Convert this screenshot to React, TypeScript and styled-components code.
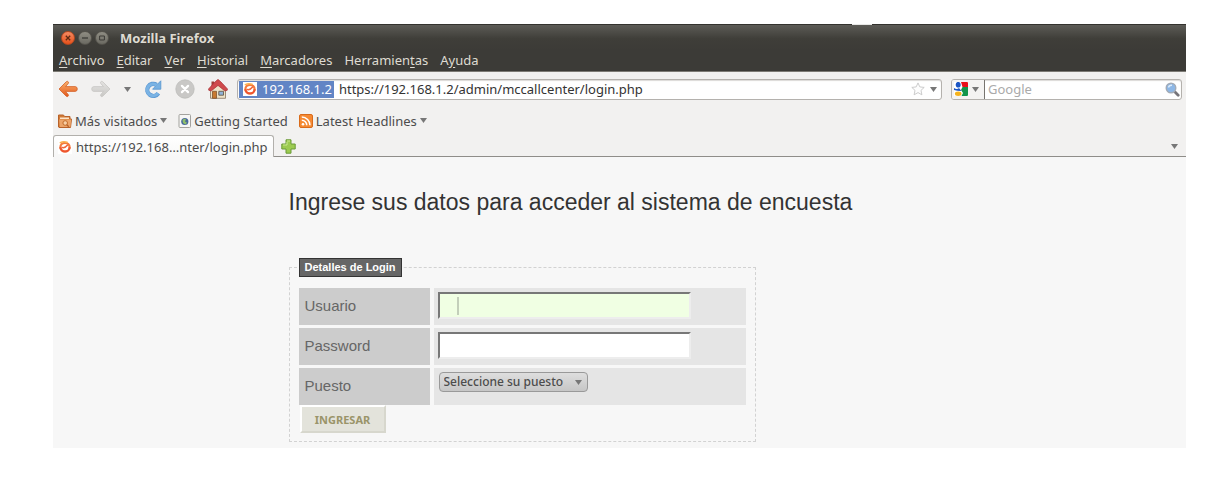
import React from "react";
import styled, { createGlobalStyle } from "styled-components";

const ui = `"Noto Sans", "Open Sans", sans-serif`;
const page = `"Liberation Sans", Arial, sans-serif`;

const GlobalStyle = createGlobalStyle`
  *, *::before, *::after { box-sizing: border-box; }
  body { margin: 0; background: #fff; font-family: ${ui}; }
  button, input, select { font: inherit; color: inherit; margin: 0; }
  svg { display: block; flex: none; }
`;

const Desktop = styled.div`
  padding: 24px 38px 44px 53px;
`;

const Window = styled.div`
  position: relative;
  color: #4c4c4c;
  font-size: 13px;
  background: #f2f1f0;
`;

const PanelNotch = styled.span`
  position: absolute;
  top: 0;
  right: 314px;
  width: 20px;
  height: 1px;
  background: #e8e8e6;
`;

const TitleBar = styled.header`
  display: flex;
  align-items: center;
  height: 26px;
  padding: 0 8px;
  gap: 3px;
  color: #dfdbd2;
  background: linear-gradient(#5c5b56, #3f3e39 55%, #3c3b37);
  border-top: 1px solid #33322e;
`;

const WindowButton = styled.button<{ $close?: boolean }>`
  display: grid;
  place-items: center;
  width: 14px;
  height: 14px;
  padding: 0;
  border: 1px solid ${(p) => (p.$close ? "#b4481f" : "#55534c")};
  border-radius: 50%;
  color: ${(p) => (p.$close ? "#5e2a12" : "#3c3b37")};
  background: ${(p) => (p.$close ? "linear-gradient(#f58a62, #e6511b)" : "linear-gradient(#8f8d83, #6b6a62)")};
`;

const WindowTitle = styled.h1`
  margin: 0 0 0 8px;
  font-size: 13px;
  line-height: 16px;
  font-weight: 700;
`;

const MenuBar = styled.nav`
  display: flex;
  align-items: center;
  height: 22px;
  padding: 0 6px 1px;
  gap: 12px;
  color: #dfdbd2;
  background: #3c3b37;
  border-bottom: 1px solid #7d7b75;
`;

const PlainButton = styled.button<{ $gap?: number }>`
  display: flex;
  align-items: center;
  gap: ${(p) => p.$gap ?? 0}px;
  padding: 0;
  border: 0;
  background: none;
  line-height: 16px;
  white-space: pre;

  u { text-underline-offset: 2px; }
`;

const NavBar = styled.div`
  display: flex;
  align-items: center;
  height: 34px;
  padding: 0 4px 0 5px;
  gap: 9px;
`;

const NavButtons = styled.div`
  display: flex;
  align-items: center;
  gap: 13px;
`;

const Field = styled.div<{ $search?: boolean }>`
  display: flex;
  align-items: center;
  flex: ${(p) => (p.$search ? "0 1 231px" : "1 1 0")};
  min-width: 0;
  height: 21px;
  background: #fff;
  border: 1px solid #b4b1ad;
  border-radius: 3px;
  box-shadow: inset 0 1px 1px #dcdad8;
  overflow: hidden;
  gap: 5px;
  padding-right: ${(p) => (p.$search ? 1 : 4)}px;
`;

const Identity = styled.span`
  display: flex;
  align-items: center;
  align-self: stretch;
  gap: 5px;
  margin: 1px 0 1px 1px;
  padding: 0 2px 0 4px;
  color: #fff;
  background: #6285c5;
`;

const FieldInput = styled.input`
  flex: 1;
  min-width: 0;
  padding: 0;
  border: 0;
  outline: 0;
  line-height: 17px;
  background: none;
  color: #333;

  &::placeholder { color: #aaa; opacity: 1; }
`;

const Engine = styled.button`
  display: flex;
  align-items: center;
  align-self: stretch;
  gap: 4px;
  padding: 0 5px 0 2px;
  border: 0;
  border-right: 1px solid #77746f;
  background: #f4f3f2;
  margin-right: -2px;
`;

const Bookmarks = styled.nav`
  display: flex;
  align-items: center;
  height: 29px;
  padding: 0 5px;
  gap: 11px;
`;

const BookmarkLink = styled.a`
  display: flex;
  align-items: center;
  gap: 2px;
  color: inherit;
  line-height: 16px;
  text-decoration: none;
`;

const TabStrip = styled.div`
  display: flex;
  align-items: center;
  height: 22px;
  padding-right: 8px;
  box-shadow: inset 0 -1px #8f8d89;
`;

const Tab = styled.button`
  display: flex;
  align-items: center;
  height: 22px;
  width: 221px;
  padding: 0 4px;
  gap: 4px;
  border: 1px solid #b2b0ac;
  border-bottom: 0;
  border-radius: 3px 3px 0 0;
  background: linear-gradient(#fff, #f7f7f7);
  white-space: nowrap;
`;

const NewTab = styled(PlainButton)`
  margin: 0 auto 0 7px;
`;

const Content = styled.main`
  padding: 29px 0 6px;
  background: #f7f7f7;
  font-family: ${page};
`;

const Column = styled.div`
  max-width: 662px;
  margin: 0 auto;
`;

const Heading = styled.h2`
  margin: 0 0 40px;
  color: #333;
  font-size: 23px;
  line-height: 32px;
  font-weight: 400;
`;

const LoginBox = styled.fieldset`
  max-width: 467px;
  margin: 0;
  padding: 11px 9px 8px;
  border: 1px dashed #d2d2d2;
`;

const Legend = styled.legend`
  height: 19px;
  padding: 0 5px;
  color: #fff;
  font-size: 11px;
  line-height: 17px;
  font-weight: 700;
  background: #666;
  border: 1px solid #333;
`;

const Rows = styled.div`
  display: grid;
  gap: 3px;
`;

const Row = styled.div`
  display: grid;
  grid-template-columns: 131px 1fr;
  gap: 4px;
  height: 37px;
`;

const Label = styled.label`
  padding: 0 6px;
  color: #666;
  font-size: 15px;
  line-height: 36px;
  background: #ccc;
`;

const Cell = styled.div`
  position: relative;
  padding: 4px;
  background: #e5e5e5;
`;

const TextInput = styled.input<{ $active?: boolean }>`
  display: block;
  width: 253px;
  height: 27px;
  padding: 0 6px;
  border: 2px solid;
  border-color: #777 #ededed #ededed #777;
  outline: 0;
  background: ${(p) => (p.$active ? "#f0ffe3" : "#fff")};
`;

const Pointer = styled.span`
  position: absolute;
  top: 9px;
  left: 23px;
  width: 2px;
  height: 18px;
  background: #c3cfba;
`;

const SelectWrap = styled.div`
  position: relative;
  width: 149px;
  margin-left: 1px;

  svg { position: absolute; right: 6px; top: 8px; pointer-events: none; }
`;

const Select = styled.select`
  display: block;
  appearance: none;
  width: 100%;
  height: 20px;
  padding: 0 4px;
  color: #4c4c4c;
  font-family: ${ui};
  font-size: 12px;
  font-weight: 500;
  line-height: 16px;
  border: 1px solid #999;
  border-radius: 4px;
  background: linear-gradient(#dedede, #c6c6c6);
`;

const Submit = styled.button`
  display: block;
  width: 86px;
  height: 28px;
  margin: 0 0 0 1px;
  padding: 0;
  color: #9a9469;
  font-family: ${ui};
  font-size: 11px;
  font-weight: 700;
  background: #e3e3db;
  border: 2px solid;
  border-color: #fff #d7d7cd #d7d7cd #fff;
`;

const Caret = () => (
  <svg width="7" height="5" viewBox="0 0 7 5"><path d="M0 0h7L3.5 5z" fill="#777" /></svg>
);

const Favicon = () => (
  <svg width="14" height="14" viewBox="0 0 14 14">
    <path fill="#fff" d="M0 0h14v14H0z" />
    <ellipse cx="7" cy="7.200" rx="4.600" ry="4.300" fill="none" stroke="#f47a3c" strokeWidth="2.200" />
    <path d="M2.400 7.200a4.600 4.300 0 0 0 9.200 0" fill="none" stroke="#ee5530" strokeWidth="2.200" />
    <path d="M2.300 2.600Q5.500 1 9 2.300" fill="none" stroke="#fbb050" strokeWidth="1.500" strokeLinecap="round" />
    <path d="M4.400 7.600Q7 8.200 9.600 5" fill="none" stroke="#f0653a" strokeWidth="1.500" strokeLinecap="round" />
  </svg>
);

const Arrow = ({ forward }: { forward?: boolean }) => (
  <svg width="20" height="18" viewBox="0 0 20 18">
    <defs>
      <linearGradient id={forward ? "fw" : "bk"} x1="0" y1="0" x2="0" y2="1">
        <stop offset="0" stopColor={forward ? "#e4e3e1" : "#fbb36e"} />
        <stop offset="1" stopColor={forward ? "#c9c8c5" : "#e2571b"} />
      </linearGradient>
    </defs>
    <path
      transform={forward ? "matrix(-1 0 0 1 20 0)" : undefined}
      d="M1 9 8.200 1.800q1.300-1 2.100.1.600 1-.3 1.900L7.500 6.600H17.300q2 .2 2 2.400t-2 2.400H7.500l2.500 2.800q.9.900.2 1.900-.8 1-2 .1z"
      fill={`url(#${forward ? "fw" : "bk"})`} stroke={forward ? "#c8c7c4" : "#d3632c"} strokeWidth=".8" strokeLinejoin="round"
    />
  </svg>
);

const Reload = () => (
  <svg width="18" height="19" viewBox="0 0 18 19">
    <path d="M14.300 13.200A6 6 0 1 1 12.500 4.800" fill="none" stroke="#5f9ad3" strokeWidth="4.400" />
    <path d="M16.800.8v8.400H8.600z" fill="#78b1e2" stroke="#5f9ad3" strokeWidth=".9" strokeLinejoin="round" />
    <path d="M14 13.100A5.900 5.900 0 1 1 12.800 5.200" fill="none" stroke="#7ab3e4" strokeWidth="3" />
  </svg>
);

const Stop = () => (
  <svg width="20" height="20" viewBox="0 0 20 20">
    <circle cx="10" cy="10" r="9.200" fill="#c9c8c6" stroke="#bdbcba" strokeWidth=".8" />
    <path d="m6.900 6.900 6.200 6.200m0-6.200-6.200 6.200" stroke="#fff" strokeWidth="2.200" strokeLinecap="round" />
  </svg>
);

const Home = () => (
  <svg width="20" height="20" viewBox="0 0 20 20">
    <path d="M3.500 2.500h2.700V8H3.500z" fill="#9f3b35" />
    <path d="M2.500 9.500 10 3l7.500 6.500v9.800h-15z" fill="#eee3c8" stroke="#87745e" strokeWidth=".8" />
    <path d="M4.500 12.300h4v7h-4z" fill="#c97a30" stroke="#764821" strokeWidth=".7" />
    <path d="M10.800 12.300h4.700v3.900h-4.700z" fill="#8fb2d8" stroke="#675b4c" strokeWidth=".9" />
    <path d="M10 .5Q9.300.5 5.500 4.600L.5 10q-.2 1.700 1.500 1.700h1.500L10 6.400l6.500 5.300H18q1.700 0 1.500-1.700l-5-5.400Q10.700.5 10 .5z" fill="#cf4a4c" stroke="#a93338" strokeWidth=".7" strokeLinejoin="round" />
  </svg>
);

const Folder = () => (
  <svg width="14" height="14" viewBox="0 0 14 14">
    <path d="M.5 13V1h5l1 1.500H12V5h1.500l-1 8.500H1z" fill="#d27a35" stroke="#b8622a" />
    <path d="M2 3.500h9V5H2z" fill="#fbe3c8" />
    <path d="M1.200 5.500h12l-.8 7.500H1.800z" fill="#eda56a" />
    <circle cx="7.200" cy="9" r="2.300" fill="#f8cfa5" stroke="#c26c2c" />
    <path d="m8.800 10.700 2 2" stroke="#b8622a" strokeWidth="1.300" />
  </svg>
);

const PageIcon = () => (
  <svg width="14" height="14" viewBox="0 0 14 14">
    <rect x="1" y=".5" width="11.500" height="13" rx="1" fill="#f6f6f5" stroke="#a3a29e" />
    <circle cx="6.800" cy="7.500" r="3.600" fill="#48699b" />
    <path d="M4.500 6q2-2 3.500-.8L7 7.500l2 1.300-1.500 1.700L5 9z" fill="#8fbf6a" />
  </svg>
);

const Feed = () => (
  <svg width="14" height="14" viewBox="0 0 14 14">
    <rect x=".5" y=".5" width="13" height="13" rx="1.500" fill="#f58a33" stroke="#d96b1a" />
    <circle cx="4" cy="10.200" r="1.300" fill="#fff" />
    <path d="M2.800 6.200a5 5 0 0 1 5 5M2.800 3.100a8.200 8.200 0 0 1 8.200 8.200" fill="none" stroke="#fff" strokeWidth="1.500" />
  </svg>
);

const Plus = () => (
  <svg width="15" height="15" viewBox="0 0 15 15">
    <path d="M5 .8h5V5h4.200v5H10v4.200H5V10H.8V5H5z" fill="#9ccb50" stroke="#6b9a38" strokeLinejoin="round" />
    <path d="M6 2h3M2 6h4V3" fill="none" stroke="#c8e88d" />
  </svg>
);

const Star = () => (
  <svg width="14" height="14" viewBox="0 0 14 14">
    <path d="m7 .9 1.800 4 4.400.5L10 8.400l.9 4.400L7 10.600l-3.900 2.200.9-4.400L.8 5.400l4.400-.5z" fill="#fdfdfd" stroke="#c6c6c6" strokeWidth=".9" strokeLinejoin="round" />
  </svg>
);

const SearchLogo = () => (
  <svg width="14" height="14" viewBox="0 0 14 14">
    <path fill="#fff" d="M0 0h14v14H0z" />
    <path d="M7 0h6q1 0 1 1v4H8.500z" fill="#e8101a" />
    <path d="M8.500 5H14v8q0 1-1 1H7.500L9 11 7 8z" fill="#11954b" />
    <ellipse cx="4.200" cy="2.700" rx="2.500" ry="2.800" fill="#1b55c4" />
    <path d="M0 6q3 2 5 0l2.500 3Q3 9 0 8z" fill="#1b55c4" />
    <ellipse cx="4.200" cy="11.800" rx="3.300" ry="2.200" fill="#f5b21c" />
  </svg>
);

const Magnifier = () => (
  <svg width="15" height="15" viewBox="0 0 15 15">
    <path d="m10 10 3.200 3.200" stroke="#77757a" strokeWidth="2.800" strokeLinecap="round" />
    <circle cx="6" cy="6" r="4.800" fill="#8db7e6" stroke="#a3abb6" strokeWidth="1.400" />
    <path d="M3.500 5.500Q4 3 7 3.200" fill="none" stroke="#dcebfa" strokeWidth="1.400" />
  </svg>
);

const menus = [
  ["", "A", "rchivo"],
  ["", "E", "ditar"],
  ["", "V", "er"],
  ["", "H", "istorial"],
  ["", "M", "arcadores"],
  ["Herramien", "t", "as"],
  ["A", "y", "uda"],
];

export default function App() {
  return (
    <>
      <GlobalStyle />
      <Desktop>
        <Window>
          <TitleBar>
            <WindowButton $close aria-label="Cerrar">
              <svg width="6" height="6" viewBox="0 0 6 6"><path d="m.8.8 4.400 4.400m0-4.400L.8 5.200" stroke="currentColor" strokeWidth="1.300" /></svg>
            </WindowButton>
            <WindowButton aria-label="Minimizar">
              <svg width="6" height="6" viewBox="0 0 6 6"><path d="M0 3h6" stroke="currentColor" strokeWidth="1.300" /></svg>
            </WindowButton>
            <WindowButton aria-label="Maximizar">
              <svg width="6" height="6" viewBox="0 0 6 6"><path d="M.6 1h4.800v4H.6z" fill="none" stroke="currentColor" /></svg>
            </WindowButton>
            <WindowTitle>Mozilla Firefox</WindowTitle>
          </TitleBar>
          <PanelNotch />
          <MenuBar>
            {menus.map(([before, key, after]) => (
              <PlainButton key={before + key + after}>{before}<u>{key}</u>{after}</PlainButton>
            ))}
          </MenuBar>
          <NavBar>
            <NavButtons>
              <PlainButton aria-label="Atrás"><Arrow /></PlainButton>
              <PlainButton aria-label="Adelante"><Arrow forward /></PlainButton>
              <PlainButton aria-label="Páginas recientes"><Caret /></PlainButton>
              <PlainButton aria-label="Recargar"><Reload /></PlainButton>
              <PlainButton aria-label="Detener"><Stop /></PlainButton>
              <PlainButton aria-label="Inicio"><Home /></PlainButton>
            </NavButtons>
            <Field>
              <Identity><Favicon />192.168.1.2</Identity>
              <FieldInput aria-label="Dirección" defaultValue="https://192.168.1.2/admin/mccallcenter/login.php" />
              <PlainButton aria-label="Agregar a marcadores"><Star /></PlainButton>
              <PlainButton aria-label="Historial de direcciones"><Caret /></PlainButton>
            </Field>
            <Field $search>
              <Engine aria-label="Motor de búsqueda"><SearchLogo /><Caret /></Engine>
              <FieldInput aria-label="Buscar" placeholder="Google" />
              <PlainButton aria-label="Iniciar búsqueda"><Magnifier /></PlainButton>
            </Field>
          </NavBar>
          <Bookmarks>
            <PlainButton $gap={3}><Folder />Más visitados<Caret /></PlainButton>
            <BookmarkLink href="#"><PageIcon />Getting Started</BookmarkLink>
            <PlainButton $gap={3}><Feed />Latest Headlines<Caret /></PlainButton>
          </Bookmarks>
          <TabStrip>
            <Tab><Favicon />https://192.168…nter/login.php</Tab>
            <NewTab aria-label="Nueva pestaña"><Plus /></NewTab>
            <PlainButton aria-label="Listar pestañas"><Caret /></PlainButton>
          </TabStrip>
          <Content>
            <Column>
              <Heading>Ingrese sus datos para acceder al sistema de encuesta</Heading>
              <form onSubmit={(e) => e.preventDefault()}>
                <LoginBox>
                  <Legend>Detalles de Login</Legend>
                  <Rows>
                    <Row>
                      <Label htmlFor="usuario">Usuario</Label>
                      <Cell><TextInput id="usuario" $active /><Pointer /></Cell>
                    </Row>
                    <Row>
                      <Label htmlFor="password">Password</Label>
                      <Cell><TextInput id="password" type="password" /></Cell>
                    </Row>
                    <Row>
                      <Label htmlFor="puesto">Puesto</Label>
                      <Cell>
                        <SelectWrap>
                          <Select id="puesto"><option>Seleccione su puesto</option></Select>
                          <Caret />
                        </SelectWrap>
                      </Cell>
                    </Row>
                  </Rows>
                  <Submit type="submit">INGRESAR</Submit>
                </LoginBox>
              </form>
            </Column>
          </Content>
        </Window>
      </Desktop>
    </>
  );
}
